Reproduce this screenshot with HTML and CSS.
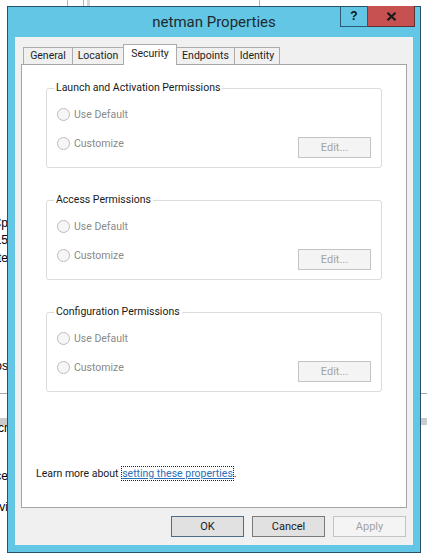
FILE: index.html
```html
<!doctype html>
<html>
    <head>
        <title>netman Properties</title>
        <meta charset="UTF-8">
        <link rel="stylesheet" href="styles.css">
    </head>

    <body>
        <!--Desktop behind the dialog-->
        <div class="desk">
            <span class="vline v1"></span>
            <span class="vline v2"></span>
            <span class="vline v3"></span>
            <span class="vline v4"></span>
            <span class="hline"></span>
            <span class="bar"></span>
            <span class="frag f1">Cp</span>
            <span class="frag f2">15</span>
            <span class="frag f3">te</span>
            <span class="frag f4">os</span>
            <span class="frag f5">cr</span>
            <span class="frag f6">ce</span>
            <span class="frag f7">vi</span>
        </div>

        <!--Window Start-->
        <div class="window">
            <div class="titlebar">
                <span></span>
                <h1 class="title">netman Properties</h1>
                <div class="caption">
                    <span class="help">?</span>
                    <span class="close">
                        <svg width="11" height="9" viewBox="0 0 11 9"><path d="M1.5 0.8 L9.5 8.2 M9.5 0.8 L1.5 8.2" stroke="#1a1a1a" stroke-width="2.2" fill="none"/></svg>
                    </span>
                </div>
            </div>

            <div class="dialog">
                <div class="tabs">
                    <span class="tab general">General</span>
                    <span class="tab location">Location</span>
                    <span class="tab security active">Security</span>
                    <span class="tab endpoints">Endpoints</span>
                    <span class="tab identity">Identity</span>
                </div>

                <div class="page">
                    <div class="group">
                        <span class="group-title">Launch and Activation Permissions</span>
                        <div class="opt first"><span class="radio"></span>Use Default</div>
                        <div class="opt-row">
                            <div class="opt"><span class="radio"></span>Customize</div>
                            <span class="btn edit">Edit...</span>
                        </div>
                    </div>

                    <div class="group">
                        <span class="group-title">Access Permissions</span>
                        <div class="opt first"><span class="radio"></span>Use Default</div>
                        <div class="opt-row">
                            <div class="opt"><span class="radio"></span>Customize</div>
                            <span class="btn edit">Edit...</span>
                        </div>
                    </div>

                    <div class="group">
                        <span class="group-title">Configuration Permissions</span>
                        <div class="opt first"><span class="radio"></span>Use Default</div>
                        <div class="opt-row">
                            <div class="opt"><span class="radio"></span>Customize</div>
                            <span class="btn edit">Edit...</span>
                        </div>
                    </div>

                    <p class="learn">Learn more about <a class="link">setting these properties</a>.</p>
                </div>

                <div class="actions">
                    <span class="btn ok">OK</span>
                    <span class="btn cancel">Cancel</span>
                    <span class="btn apply">Apply</span>
                </div>
            </div>
        </div>
        <!--Window End-->
    </body>
</html>
```

FILE: styles.css
```css
body{
    margin: 0;
    width: 427px;
    height: 556px;
    overflow: hidden;
    position: relative;
    background: #ffffff;
    font-family: Roboto, "Liberation Sans", Arial, sans-serif;
    font-size: 10.5px;
    color: #1e1e1e;
}

/*Desktop behind*/
.desk{
    position: absolute;
    left: 0;
    top: 0;
    right: 0;
    bottom: 0;
}
.desk .vline{
    position: absolute;
    top: 0;
    width: 1px;
    height: 7px;
    background: #b5b5b5;
}
.v1{ left: 67px; }
.v2{ left: 83px; }
.v3{ left: 87px; width: 3px !important; background: #d9d9d9 !important; }
.v4{ left: 259px; }
.desk .hline{
    position: absolute;
    left: 0;
    right: 0;
    top: 393px;
    height: 1px;
    background: #a9a9a9;
}
.desk .bar{
    position: absolute;
    left: 0;
    right: 0;
    top: 418px;
    height: 7px;
    background: #cbcbcb;
}
.desk .frag{
    position: absolute;
    right: 419px;
    font-family: "Liberation Sans", Arial, sans-serif;
    font-size: 12px;
    line-height: 14px;
    color: #000;
}
.f1{ top: 216px; }
.f2{ top: 233px; }
.f3{ top: 251px; }
.f4{ top: 359px; }
.f5{ top: 421px; }
.f6{ top: 469px; }
.f7{ top: 500px; }

/*Window*/
.window{
    position: relative;
    box-sizing: border-box;
    width: 414px;
    height: 547px;
    margin: 6px 0 0 7px;
    border: 1px solid #25516b;
    background: #62c6e4;
    padding: 0 7px 7px;
}

.titlebar{
    display: grid;
    grid-template-columns: 1fr auto 1fr;
    height: 30px;
    margin: 0 -7px;
}
.titlebar .title{
    margin: 0;
    font-size: 15px;
    font-weight: normal;
    line-height: 30px;
    color: #1f2a30;
}
.caption{
    justify-self: end;
    align-self: start;
    display: flex;
    margin-top: -1px;
    margin-right: 5px;
}
.caption .help{
    box-sizing: border-box;
    width: 28px;
    height: 21px;
    border: 1px solid #2d5a72;
    border-top: none;
    text-align: center;
    font-family: "Liberation Sans", Arial, sans-serif;
    font-weight: bold;
    font-size: 12px;
    line-height: 20px;
    color: #111;
}
.caption .close{
    box-sizing: border-box;
    width: 47px;
    height: 21px;
    background: #c75050;
    border-bottom: 1px solid #5a3030;
    border-right: 1px solid #5a3030;
    display: flex;
    align-items: center;
    justify-content: center;
}

/*Dialog body*/
.dialog{
    box-sizing: border-box;
    height: 508px;
    background: #f0f0f0;
    padding: 7px 6px 0;
    display: flex;
    flex-direction: column;
}

.tabs{
    display: flex;
    align-items: flex-end;
    height: 20px;
    margin-left: 2px;
    position: relative;
    z-index: 1;
}
.tab{
    box-sizing: border-box;
    height: 17px;
    border: 1px solid #acacac;
    border-bottom: none;
    background: #f0f0f0;
    margin-right: -1px;
    text-align: center;
    line-height: 16px;
    color: #1e1e1e;
}
.tab.general{ width: 50px; }
.tab.location{ width: 52px; }
.tab.security{ width: 54px; }
.tab.endpoints{ width: 59px; }
.tab.identity{ width: 46px; }
.tab.active{
    height: 21px;
    margin-bottom: -1px;
    background: #ffffff;
    line-height: 18px;
    position: relative;
    z-index: 2;
}

.page{
    box-sizing: border-box;
    height: 444px;
    border: 1px solid #a5a5a5;
    background: #ffffff;
    padding: 23px 24px 26px 14px;
    display: flex;
    flex-direction: column;
}

.group{
    box-sizing: border-box;
    height: 80px;
    margin: 0 0 32px 10px;
    border: 1px solid #dcdcdc;
    border-radius: 3px;
}
.group-title{
    display: block;
    width: fit-content;
    margin: -8px 0 0 7px;
    padding: 0 2px;
    background: #ffffff;
    line-height: 14px;
    color: #1a1a1a;
}
.opt{
    display: flex;
    align-items: center;
    height: 16px;
    padding-left: 10px;
    color: #8a8a8a;
}
.opt.first{
    margin-top: 11px;
}
.opt-row{
    display: flex;
    justify-content: space-between;
    margin-top: 13px;
    height: 16px;
}
.radio{
    box-sizing: border-box;
    width: 13px;
    height: 13px;
    border: 1px solid #bcbcbc;
    border-radius: 50%;
    background: #f6f6f6;
    margin-right: 4px;
}

.btn{
    box-sizing: border-box;
    display: block;
    width: 73px;
    height: 21px;
    border: 1px solid #adadad;
    background: #e1e1e1;
    text-align: center;
    line-height: 19px;
    font-size: 11px;
    color: #1a1a1a;
}
.btn.edit{
    margin: 2px 10px 0 0;
    border-color: #c4c4c4;
    background: #f4f4f4;
    color: #a3a3a3;
}

.learn{
    margin: auto 0 0;
    line-height: 14px;
    color: #1a1a1a;
}
.link{
    color: #2a6fb8;
    text-decoration: underline;
    border: 1px dotted #222;
}

.actions{
    display: flex;
    justify-content: flex-end;
    gap: 8px;
    margin-top: 8px;
    padding-right: 1px;
}
.btn.ok{
    border-color: #4f6c86;
}
.btn.cancel{
    border-color: #7a7a7a;
}
.btn.apply{
    border-color: #c4c4c4;
    background: #f4f4f4;
    color: #a3a3a3;
}
```
